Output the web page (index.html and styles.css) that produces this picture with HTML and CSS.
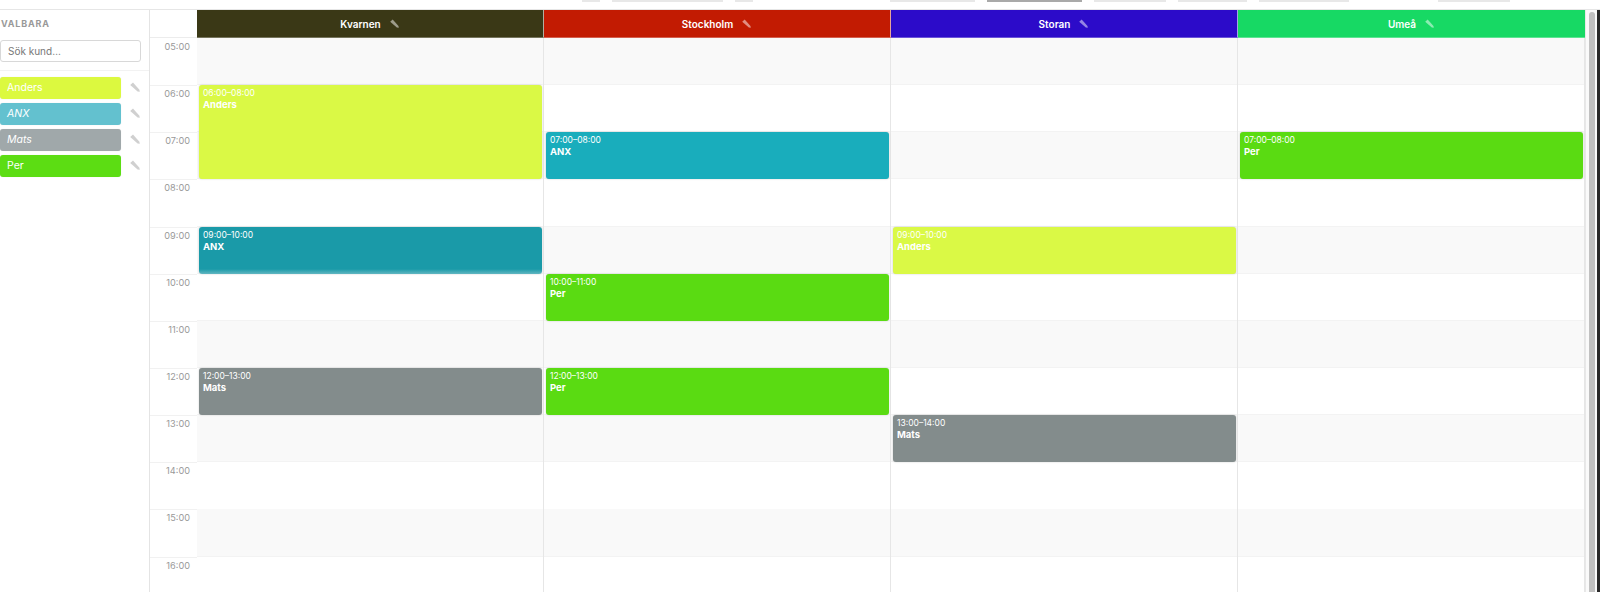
FILE: index.html
```html
<!DOCTYPE html>
<html>
  <head>
    <meta charset="UTF-8">
    <title>Schema</title>
    <link rel="stylesheet" href="styles.css">
  </head>
  <body>
    <div class="topbar">
      <span class="top-btn w18 ml582"></span>
      <span class="top-btn w111"></span>
      <span class="top-btn w18"></span>
      <span class="top-btn w85 ml137"></span>
      <span class="top-btn w95 active"></span>
      <span class="top-btn w72"></span>
      <span class="top-btn w69"></span>
      <span class="top-btn w90"></span>
      <span class="top-btn w72 ml89"></span>
    </div>

    <div class="main">
      <div class="sidebar">
        <div class="side-head">
          <h2 class="side-title">VALBARA</h2>
          <input class="search" type="text" placeholder="Sök kund…">
        </div>
        <div class="customers">
          <div class="customer">
            <span class="chip lime">Anders</span>
            <svg class="pencil" viewBox="0 0 10 10"><path d="M.2 3 3 .5 9.4 7.8 9.8 9.8 7.6 9.4Z"/></svg>
          </div>
          <div class="customer">
            <span class="chip teal"><em>ANX</em></span>
            <svg class="pencil" viewBox="0 0 10 10"><path d="M.2 3 3 .5 9.4 7.8 9.8 9.8 7.6 9.4Z"/></svg>
          </div>
          <div class="customer">
            <span class="chip gray"><em>Mats</em></span>
            <svg class="pencil" viewBox="0 0 10 10"><path d="M.2 3 3 .5 9.4 7.8 9.8 9.8 7.6 9.4Z"/></svg>
          </div>
          <div class="customer">
            <span class="chip green">Per</span>
            <svg class="pencil" viewBox="0 0 10 10"><path d="M.2 3 3 .5 9.4 7.8 9.8 9.8 7.6 9.4Z"/></svg>
          </div>
        </div>
      </div>

      <div class="calendar">
        <div class="cal-head">
          <div class="corner"></div>
          <div class="col-title kvarnen">Kvarnen <svg class="pencil" viewBox="0 0 10 10"><path d="M.2 3 3 .5 9.4 7.8 9.8 9.8 7.6 9.4Z"/></svg></div>
          <div class="col-title stockholm">Stockholm <svg class="pencil" viewBox="0 0 10 10"><path d="M.2 3 3 .5 9.4 7.8 9.8 9.8 7.6 9.4Z"/></svg></div>
          <div class="col-title storan">Storan <svg class="pencil" viewBox="0 0 10 10"><path d="M.2 3 3 .5 9.4 7.8 9.8 9.8 7.6 9.4Z"/></svg></div>
          <div class="col-title umea">Umeå <svg class="pencil" viewBox="0 0 10 10"><path d="M.2 3 3 .5 9.4 7.8 9.8 9.8 7.6 9.4Z"/></svg></div>
        </div>

        <div class="cal-body">
          <div class="hours">
            <div class="hour">05:00</div>
            <div class="hour">06:00</div>
            <div class="hour">07:00</div>
            <div class="hour">08:00</div>
            <div class="hour">09:00</div>
            <div class="hour">10:00</div>
            <div class="hour">11:00</div>
            <div class="hour">12:00</div>
            <div class="hour">13:00</div>
            <div class="hour">14:00</div>
            <div class="hour">15:00</div>
            <div class="hour">16:00</div>
          </div>

          <div class="day">
            <div class="event ev-lime" style="grid-row: 2 / 4">
              <span class="ev-time">06:00–08:00</span>
              <span class="ev-name">Anders</span>
            </div>
            <div class="event ev-teal-dark" style="grid-row: 5 / 6">
              <span class="ev-time">09:00–10:00</span>
              <span class="ev-name">ANX</span>
            </div>
            <div class="event ev-gray" style="grid-row: 8 / 9">
              <span class="ev-time">12:00–13:00</span>
              <span class="ev-name">Mats</span>
            </div>
          </div>

          <div class="day">
            <div class="event ev-teal" style="grid-row: 3 / 4">
              <span class="ev-time">07:00–08:00</span>
              <span class="ev-name">ANX</span>
            </div>
            <div class="event ev-green" style="grid-row: 6 / 7">
              <span class="ev-time">10:00–11:00</span>
              <span class="ev-name">Per</span>
            </div>
            <div class="event ev-green" style="grid-row: 8 / 9">
              <span class="ev-time">12:00–13:00</span>
              <span class="ev-name">Per</span>
            </div>
          </div>

          <div class="day">
            <div class="event ev-lime" style="grid-row: 5 / 6">
              <span class="ev-time">09:00–10:00</span>
              <span class="ev-name">Anders</span>
            </div>
            <div class="event ev-gray" style="grid-row: 9 / 10">
              <span class="ev-time">13:00–14:00</span>
              <span class="ev-name">Mats</span>
            </div>
          </div>

          <div class="day">
            <div class="event ev-green" style="grid-row: 3 / 4">
              <span class="ev-time">07:00–08:00</span>
              <span class="ev-name">Per</span>
            </div>
          </div>
        </div>
      </div>

      <div class="scrollbar">
        <div class="thumb"></div>
      </div>
      <div class="screen-edge"></div>
    </div>
  </body>
</html>
```

FILE: styles.css
```css
* {
  box-sizing: border-box;
}

body {
  margin: 0;
  height: 592px;
  overflow: hidden;
  display: flex;
  flex-direction: column;
  background-color: #fff;
  font-family: Inter, "Liberation Sans", sans-serif;
  color: #fff;
}

/* what is left of the toolbar above the fold */
.topbar {
  height: 10px;
  flex: none;
  display: flex;
  gap: 12px;
  align-items: flex-start;
  border-bottom: 1px solid #e6e6e6;
}

.top-btn {
  height: 2px;
  background-color: #e8e8e8;
}

.top-btn.active {
  background-color: #a9a9a9;
}

.w18 { width: 18px; }
.w111 { width: 111px; }
.w85 { width: 85px; }
.w95 { width: 95px; }
.w72 { width: 72px; }
.w69 { width: 69px; }
.w90 { width: 90px; }
.ml582 { margin-left: 582px; }
.ml137 { margin-left: 125px; }
.ml89 { margin-left: 77px; }

.main {
  flex: 1;
  min-height: 0;
  display: flex;
}

/* left column */
.sidebar {
  width: 150px;
  flex: none;
  border-right: 1px solid #e4e4e4;
}

.side-head {
  height: 61px;
  border-bottom: 1px solid #f2f2f2;
}

.side-title {
  margin: 0;
  padding: 9px 0 0 1px;
  height: 30px;
  font-size: 9px;
  line-height: 10px;
  font-weight: 700;
  letter-spacing: 0.8px;
  color: #999;
}

.search {
  display: block;
  width: 141px;
  height: 22px;
  padding: 0 7px;
  border: 1px solid #d8d8d8;
  border-radius: 3px;
  font-family: inherit;
  font-size: 10px;
  color: #555;
}

.search::placeholder {
  color: #777;
  opacity: 1;
}

.customers {
  padding-top: 6px;
  display: flex;
  flex-direction: column;
  gap: 4px;
}

.customer {
  display: flex;
  align-items: center;
  height: 22px;
}

.chip {
  width: 121px;
  height: 22px;
  padding-left: 7px;
  border-radius: 3px;
  font-size: 10.5px;
  line-height: 22px;
  box-shadow: 0 0 1px rgba(0, 0, 0, 0.15);
}

.pencil {
  flex: none;
  fill: currentColor;
}

.customer .pencil {
  width: 10px;
  height: 10px;
  margin: 0 0 3px 9px;
  color: #d0d0d0;
}

.lime { background-color: #dcf93f; }
.teal { background-color: #63c1cf; }
.gray { background-color: #a0a8aa; }
.green { background-color: #5cdd13; }

/* calendar */
.calendar {
  width: 1435px;
  flex: none;
  overflow: hidden;
}

.cal-head,
.cal-body {
  display: grid;
  grid-template-columns: 47px repeat(4, 1fr);
}

.cal-head {
  height: 28px;
}

.corner {
  border-bottom: 1px solid #ececec;
}

.col-title {
  display: flex;
  align-items: center;
  justify-content: center;
  gap: 9px;
  padding-right: 1px;
  font-size: 10px;
  font-weight: 600;
  border-bottom: 1px solid rgba(255, 255, 255, 0.3);
  border-right: 1px solid rgba(255, 255, 255, 0.6);
}

.col-title:last-child {
  border-right: none;
}

.col-title .pencil {
  width: 9px;
  height: 9px;
  color: rgba(255, 255, 255, 0.5);
}

.kvarnen { background-color: #3a3816; }
.stockholm { background-color: #c21b02; }
.storan { background-color: #2c0bc9; }
.umea { background-color: #17d964; }

.hour {
  height: 47.15px;
  padding: 1px 7px 0 0;
  border-top: 1px solid #f1f1f1;
  text-align: right;
  font-size: 9.2px;
  line-height: 14px;
  color: #999;
}

.hour:first-child {
  padding-top: 2px;
  border-top: none;
}

.day {
  display: grid;
  grid-template-rows: repeat(12, 47.15px);
  border-right: 1px solid #e6e6e6;
  background-image: repeating-linear-gradient(
    #f9f9f9 0,
    #f9f9f9 46.15px,
    #f3f3f3 46.15px,
    #f3f3f3 47.15px,
    #fff 47.15px,
    #fff 93.3px,
    #f3f3f3 93.3px,
    #f3f3f3 94.3px
  );
}

.event {
  grid-column: 1;
  margin: 0 1.5px 0 2px;
  padding: 3px 4px;
  border-radius: 3px;
  box-shadow: 0 0 2px rgba(0, 0, 0, 0.2);
  display: flex;
  flex-direction: column;
}

.ev-time {
  font-size: 8.5px;
  line-height: 11px;
}

.ev-name {
  font-size: 9.5px;
  line-height: 12px;
  font-weight: 700;
}

.ev-lime { background-color: #daf945; }
.ev-teal { background-color: #19adbc; }
.ev-gray { background-color: #838c8c; }
.ev-green { background-color: #5adb12; }
.ev-teal-dark {
  background-image: linear-gradient(#1a9aa8 0, #1a9aa8 calc(100% - 5px), #62b6c1 100%);
}

/* scroll track and the edge of the screen */
.scrollbar {
  width: 12px;
  flex: none;
  padding: 2px 2px 0 3px;
  background-color: #fafafa;
  border-left: 1px solid #e8e8e8;
}

.thumb {
  height: 100%;
  border-radius: 4px 4px 0 0;
  background-color: #c1c1c1;
}

.screen-edge {
  flex: 1;
  background-color: #2a2a2a;
}
```
